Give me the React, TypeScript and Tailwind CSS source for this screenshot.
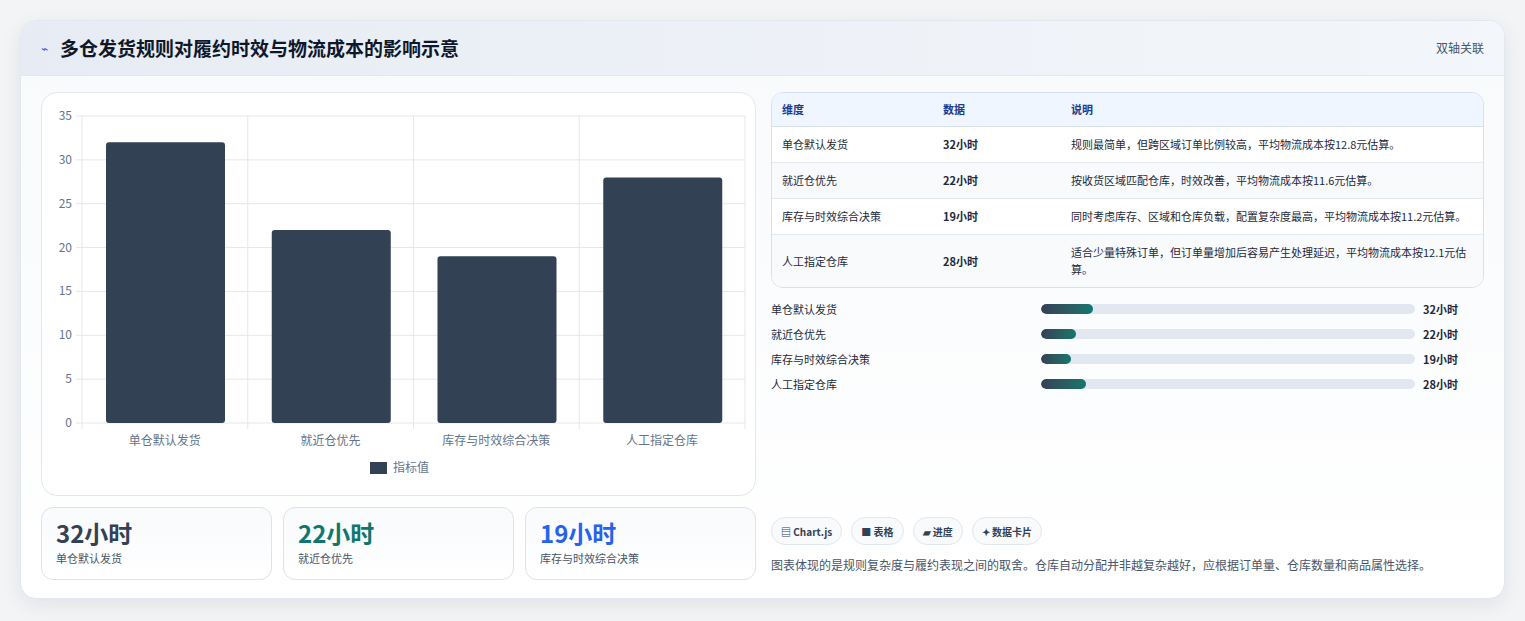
const F = { fontFamily: '"Noto Sans CJK SC", "Noto Sans", sans-serif' };

const bars = [
  { name: "单仓默认发货", v: 32 },
  { name: "就近仓优先", v: 22 },
  { name: "库存与时效综合决策", v: 19 },
  { name: "人工指定仓库", v: 28 },
];

const rows = [
  ["单仓默认发货", "32小时", "规则最简单，但跨区域订单比例较高，平均物流成本按12.8元估算。"],
  ["就近仓优先", "22小时", "按收货区域匹配仓库，时效改善，平均物流成本按11.6元估算。"],
  ["库存与时效综合决策", "19小时", "同时考虑库存、区域和仓库负载，配置复杂度最高，平均物流成本按11.2元估算。"],
  ["人工指定仓库", "28小时", "适合少量特殊订单，但订单量增加后容易产生处理延迟，平均物流成本按12.1元估算。"],
];

function Chart() {
  const x0 = 40, x1 = 703, y0 = 23, y1 = 330;
  const sy = (v: number) => y1 - (v / 35) * (y1 - y0);
  const cw = (x1 - x0) / 4;
  return (
    <svg width="715" height="403" className="block">
      {[0, 5, 10, 15, 20, 25, 30, 35].map((t) => (
        <g key={t}>
          <line x1={x0 - 6} x2={x1} y1={sy(t)} y2={sy(t)} stroke="#e5e7eb" />
          <text x={x0 - 10} y={sy(t) + 4} textAnchor="end" fontSize="12" fill="#64748b" style={F}>{t}</text>
        </g>
      ))}
      {[0, 1, 2, 3, 4].map((i) => (
        <line key={i} x1={x0 + i * cw} x2={x0 + i * cw} y1={y0} y2={y1 + 6} stroke="#e5e7eb" />
      ))}
      {bars.map((b, i) => (
        <g key={b.name}>
          <rect x={x0 + i * cw + 24} y={sy(b.v)} width={119} height={y1 - sy(b.v)} rx="3" fill="#334155" />
          <text x={x0 + i * cw + cw / 2} y={352} textAnchor="middle" fontSize="12" fill="#64748b" style={F}>{b.name}</text>
        </g>
      ))}
      <rect x="328" y="369" width="17" height="12" fill="#334155" />
      <text x="351" y="379" fontSize="12" fill="#64748b" style={F}>指标值</text>
    </svg>
  );
}

export default function App() {
  return (
    <div className="w-[1525px] h-[621px] bg-[#f3f4f6] pt-5 px-5" style={F}>
      <div className="w-[1485px] h-[579px] bg-white rounded-2xl border border-[#e2e8f0] shadow-[0_6px_20px_rgba(15,23,42,0.08)] overflow-hidden">
        <div className="h-[55px] flex items-center justify-between px-5 bg-gradient-to-r from-[#e7ecf4] to-[#f3f6fa] border-b border-[#e2e8f0]">
          <div className="flex items-center gap-3">
            <span className="text-[#3b5bdb] text-xs">⌁</span>
            <span className="text-[19px] font-bold text-[#0f172a]">多仓发货规则对履约时效与物流成本的影响示意</span>
          </div>
          <span className="text-xs text-[#475569]">双轴关联</span>
        </div>
        <div className="flex gap-[15px] px-5 pt-4 bg-gradient-to-b from-[#f8fafc] to-white">
          <div className="w-[715px] flex flex-col gap-[11px]">
            <div className="h-[404px] border border-[#e2e8f0] rounded-2xl bg-white overflow-hidden">
              <Chart />
            </div>
            <div className="flex gap-[11px]">
              {[
                ["32小时", "单仓默认发货", "text-[#334155]"],
                ["22小时", "就近仓优先", "text-[#0f766e]"],
                ["19小时", "库存与时效综合决策", "text-[#2563eb]"],
              ].map(([v, l, c]) => (
                <div key={l} className="flex-1 h-[73px] border border-[#dbe3ee] rounded-xl bg-gradient-to-b from-[#f8fafc] to-white px-[14px] pt-[8px]">
                  <div className={`text-[24px] font-bold leading-[34px] ${c}`}>{v}</div>
                  <div className="text-[11px] text-[#475569]">{l}</div>
                </div>
              ))}
            </div>
          </div>
          <div className="flex-1 flex flex-col">
            <div className="border border-[#d7e1ee] rounded-xl overflow-hidden text-[11px]">
              <div className="flex h-[34px] items-center bg-[#eff6ff] font-bold text-[#1e3a8a] border-b border-[#d7e1ee]">
                <div className="w-[171px] pl-[10px]">维度</div>
                <div className="w-[128px]">数据</div>
                <div className="flex-1">说明</div>
              </div>
              {rows.map((r, i) => (
                <div key={r[0]} className={`flex items-center py-[9px] text-[#1e293b] ${i < 3 ? "border-b border-[#e2e8f0]" : ""} ${i % 2 ? "bg-[#f8fafc]" : "bg-white"}`}>
                  <div className="w-[171px] pl-[10px]">{r[0]}</div>
                  <div className="w-[128px] font-bold">{r[1]}</div>
                  <div className="flex-1 pr-2 leading-[17px]">{r[2]}</div>
                </div>
              ))}
            </div>
            <div className="mt-[12px] flex flex-col gap-[7px]">
              {[["单仓默认发货", 52, "32小时"], ["就近仓优先", 35, "22小时"], ["库存与时效综合决策", 30, "19小时"], ["人工指定仓库", 45, "28小时"]].map(([l, w, v]) => (
                <div key={l as string} className="flex items-center h-[18px] text-[11px] text-[#1e293b]">
                  <div className="w-[270px]">{l}</div>
                  <div className="w-[374px] h-[10px] rounded-full bg-[#e2e8f0] overflow-hidden">
                    <div className="h-full rounded-full bg-gradient-to-r from-[#334155] to-[#0f766e]" style={{ width: w as number }} />
                  </div>
                  <div className="ml-2 font-bold">{v}</div>
                </div>
              ))}
            </div>
            <div className="mt-[124px] flex gap-[9px] text-[10px] font-bold text-[#334155]">
              {["▤ Chart.js", "■ 表格", "▰ 进度", "✦ 数据卡片"].map((t) => (
                <span key={t} className="h-[28px] px-[9px] flex items-center rounded-full border border-[#e2e8f0] bg-[#f8fafc]">{t}</span>
              ))}
            </div>
            <div className="mt-[11px] text-[12px] text-[#475569]">图表体现的是规则复杂度与履约表现之间的取舍。仓库自动分配并非越复杂越好，应根据订单量、仓库数量和商品属性选择。</div>
          </div>
        </div>
      </div>
    </div>
  );
}
